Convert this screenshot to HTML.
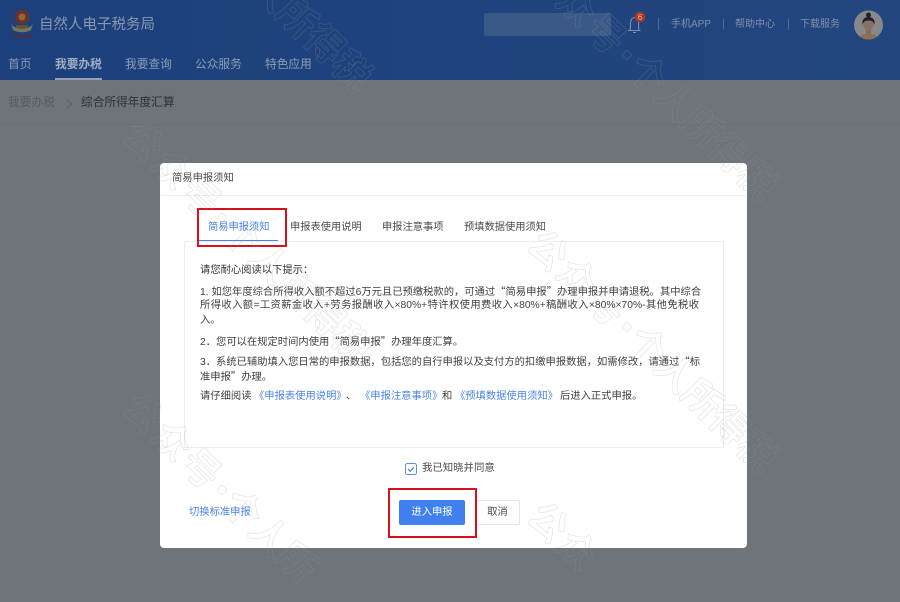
<!DOCTYPE html>
<html lang="zh">
<head>
<meta charset="utf-8">
<title>简易申报须知</title>
<style>
html,body{margin:0;padding:0;width:900px;height:602px;overflow:hidden}
body{position:relative;background:#6f737a;font-family:"Liberation Sans","Noto Sans CJK SC",sans-serif;color:#444}
.a{position:absolute;white-space:nowrap}
.q{font-family:"Noto Sans CJK SC",sans-serif}
#hd{left:0;top:0;width:900px;height:80px;background:linear-gradient(90deg,#1b407b,#234680)}
.nav{color:#8d9cb4;font-size:11.7px;top:57px;line-height:16px}
.top{color:#8090a9;font-size:10px;top:17px;line-height:16px}
.sep{width:1px;height:12px;background:#506c95;top:18px}
#modal{left:160px;top:163px;width:587px;height:385px;background:#fff;border-radius:4px}
.line{left:200px;font-size:10.3px;line-height:15px;color:#3f3f3f;text-align:justify;text-align-last:justify}
.l2{font-size:10.3px;line-height:15px;color:#3f3f3f;top:389px}
.tab{font-size:10.25px;top:220px;line-height:15px;color:#4a4a4a}
.blue{color:#4b83e8}
.red{border:2px solid #d8101c;box-sizing:border-box}
</style>
</head>
<body>
<div class="a" id="hd"></div>

<!-- logo -->
<svg class="a" style="left:8px;top:7px" width="28" height="34" viewBox="0 0 28 34">
  <path d="M3 17C7 23 21 23 25 17L23 23C18 26 10 26 5 23Z" fill="#74755a"/>
  <circle cx="14" cy="10" r="7" fill="#703026"/>
  <circle cx="14" cy="10" r="3.500" fill="#8a6a35"/>
  <path d="M8 18H20V21H8Z" fill="#62523a"/>
  <path d="M5 28H24V30H5Z" fill="#652633"/>
</svg>
<div class="a" style="left:39px;top:15px;font-size:14.5px;line-height:20px;color:#8a98b0">自然人电子税务局</div>

<div class="a nav" style="left:8px">首页</div>
<div class="a nav" style="left:55px;font-weight:bold;color:#a0acc0">我要办税</div>
<div class="a" style="left:55px;top:78px;width:47px;height:2px;background:#94a0b5"></div>
<div class="a nav" style="left:125px">我要查询</div>
<div class="a nav" style="left:195px">公众服务</div>
<div class="a nav" style="left:265px">特色应用</div>

<!-- search -->
<div class="a" style="left:484px;top:13px;width:127px;height:23px;background:#3a5987;border-radius:2px"></div>

<!-- bell -->
<svg class="a" style="left:625px;top:10px" width="24" height="24" viewBox="0 0 24 24">
  <path d="M3 20.500H15.500M5 20C6 17 5 15 5.500 12.500C6 9.500 7.500 7.500 9.500 7.500C11.500 7.500 13 9.500 13.500 12.500C14 15 13 17 14 20M8 22.500H11" fill="none" stroke="#8090a9" stroke-width="1.100"/>
  <circle cx="15" cy="7" r="5.300" fill="#a83a28"/>
  <text x="15" y="10" text-anchor="middle" font-size="8.500" fill="#d8b8a6" font-family="Liberation Sans">6</text>
</svg>

<div class="a sep" style="left:658px"></div>
<div class="a top" style="left:671px">手机APP</div>
<div class="a sep" style="left:723px"></div>
<div class="a top" style="left:735px">帮助中心</div>
<div class="a sep" style="left:788px"></div>
<div class="a top" style="left:800px">下载服务</div>

<!-- avatar -->
<svg class="a" style="left:854px;top:10px" width="29" height="30" viewBox="0 0 29 30">
  <defs><clipPath id="c"><circle cx="14.500" cy="15" r="14.500"/></clipPath></defs>
  <g clip-path="url(#c)">
    <rect width="29" height="30" fill="#86888a"/>
    <path d="M4 30C5 25 10 24 14.500 24C19 24 24 25 25 30Z" fill="#916e4e"/>
    <rect x="12" y="18" width="5" height="7" fill="#866b59"/>
    <ellipse cx="14.500" cy="14" rx="5" ry="6" fill="#857168"/>
    <path d="M8.500 15C7.500 9 11 7 14.500 7C18 7 21.500 9 20.500 15C19.500 11 17 10.500 14.500 10.500C12 10.500 9.500 11 8.500 15Z" fill="#222026"/>
    <circle cx="14.500" cy="5" r="2.500" fill="#222026"/>
  </g>
</svg>

<!-- breadcrumb -->
<div class="a" style="left:8px;top:95px;font-size:11.700px;line-height:16px;color:#565a61">我要办税</div>
<svg class="a" style="left:64px;top:98px" width="10" height="12" viewBox="0 0 10 12"><path d="M2.500 1.500L7.500 6L2.500 10.500" fill="none" stroke="#585c63" stroke-width="1"/></svg>
<div class="a" style="left:81px;top:95px;font-size:11.700px;line-height:16px;color:#2e3136">综合所得年度汇算</div>
<div class="a" style="left:0;top:124px;width:900px;height:1px;background:#6a6e75"></div>

<!-- modal -->
<div class="a" id="modal"></div>
<div class="a" style="left:172px;top:171px;font-size:10.300px;line-height:15px;color:#4a4a4a">简易申报须知</div>
<div class="a" style="left:161px;top:195px;width:585px;height:1px;background:#eceef0"></div>

<div class="a tab blue" style="left:208px">简易申报须知</div>
<div class="a" style="left:199px;top:240px;width:79px;height:2px;background:#4b83e8"></div>
<div class="a tab" style="left:290px">申报表使用说明</div>
<div class="a tab" style="left:382px">申报注意事项</div>
<div class="a tab" style="left:464px">预填数据使用须知</div>

<div class="a" style="left:184px;top:241px;width:538px;height:205px;border:1px solid #eceef0"></div>

<div class="a line" style="top:263px;color:#333;text-align-last:left">请您耐心阅读以下提示：</div>
<div class="a line" style="top:283px;width:499px">1. 如您年度综合所得收入额不超过6万元且已预缴税款的，可通过<span class="q">“</span>简易申报<span class="q">”</span>办理申报并申请退税。其中综合</div>
<div class="a line" style="top:298px;width:499px">所得收入额=工资薪金收入+劳务报酬收入×80%+特许权使用费收入×80%+稿酬收入×80%×70%-其他免税收</div>
<div class="a line" style="top:313px">入。</div>
<div class="a line" style="top:333px;width:255px">2．您可以在规定时间内使用<span class="q">“</span>简易申报<span class="q">”</span>办理年度汇算。</div>
<div class="a line" style="top:353px;width:499px">3．系统已辅助填入您日常的申报数据，包括您的自行申报以及支付方的扣缴申报数据，如需修改，请通过<span class="q">“</span>标</div>
<div class="a line" style="top:368px">准申报<span class="q">”</span>办理。</div>

<div class="a l2" style="left:200px">请仔细阅读</div>
<div class="a l2" style="left:254px;color:#4b83e8">《申报表使用说明》</div>
<div class="a l2" style="left:346px">、</div>
<div class="a l2" style="left:360px;color:#4b83e8">《申报注意事项》</div>
<div class="a l2" style="left:442px">和</div>
<div class="a l2" style="left:455px;color:#4b83e8">《预填数据使用须知》</div>
<div class="a l2" style="left:560px">后进入正式申报。</div>

<!-- checkbox -->
<svg class="a" style="left:405px;top:463px" width="12" height="12" viewBox="0 0 12 12">
  <rect x=".5" y=".5" width="11" height="11" rx="2" fill="#fff" stroke="#5b8fe6"/>
  <path d="M3 6L5.200 8.200L9 4" fill="none" stroke="#4b83e8" stroke-width="1.200"/>
</svg>
<div class="a" style="left:422px;top:461px;font-size:10.400px;line-height:15px;color:#4a4a4a">我已知晓并同意</div>

<div class="a blue" style="left:189px;top:505px;font-size:10.300px;line-height:15px">切换标准申报</div>
<div class="a" style="left:399px;top:500px;width:66px;height:25px;background:#3f80ee;border-radius:2px;color:#fff;font-size:10.300px;line-height:25px;text-align:center">进入申报</div>
<div class="a" style="left:475px;top:500px;width:43px;height:23px;border:1px solid #e4e6e8;border-radius:2px;color:#4a4a4a;font-size:10.300px;line-height:23px;text-align:center">取消</div>

<!-- red annotation boxes -->
<div class="a red" style="left:197px;top:208px;width:90px;height:39px"></div>
<div class="a red" style="left:388px;top:488px;width:89px;height:50px"></div>

<!-- watermark -->
<svg class="a" style="left:0;top:0;overflow:hidden" width="900" height="602" viewBox="0 0 900 602" font-family="Liberation Sans,Noto Sans CJK SC,sans-serif" font-size="38" font-weight="bold" fill="none" stroke="#9a9a9a" stroke-opacity=".28" stroke-width=".7">
  <g transform="translate(222,-54) rotate(44)"><text x="9" y="13">个人所得税</text></g>
  <g transform="translate(627,55) rotate(44)"><text x="-129" y="13" letter-spacing="2">公众号</text><rect x="-3.500" y="-3.500" width="7" height="7"/><text x="9" y="13">个人所得税</text></g>
  <g transform="translate(222,218) rotate(44)"><text x="-129" y="13" letter-spacing="2">公众号</text><rect x="-3.500" y="-3.500" width="7" height="7"/><text x="9" y="13">个人所得税</text></g>
  <g transform="translate(627,327) rotate(44)"><text x="-129" y="13" letter-spacing="2">公众号</text><rect x="-3.500" y="-3.500" width="7" height="7"/><text x="9" y="13">个人所得税</text></g>
  <g transform="translate(222,490) rotate(44)"><text x="-129" y="13" letter-spacing="2">公众号</text><rect x="-3.500" y="-3.500" width="7" height="7"/><text x="9" y="13">个人所</text></g>
  <g transform="translate(627,599) rotate(44)"><text x="-129" y="13" letter-spacing="2">公众</text></g>
</svg>
</body>
</html>
